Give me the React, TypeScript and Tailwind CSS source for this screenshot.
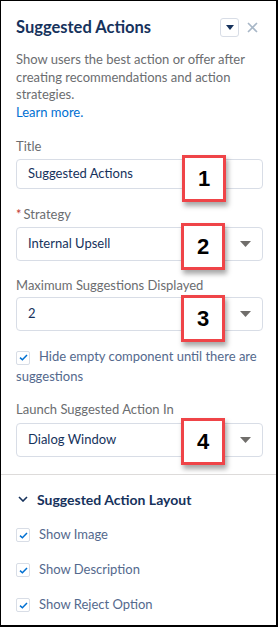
import React from "react";

function Badge({ n, top, left }: { n: string; top: number; left: number }) {
  return (
    <div
      className="absolute w-[44px] h-[47px] bg-white border-[3px] border-[#ef4448] shadow-[2px_4px_5px_rgba(0,0,0,0.35)] flex items-center justify-center font-['Liberation_Sans',Arial,sans-serif] font-bold text-[22px] text-black"
      style={{ top, left }}
    >
      {n}
    </div>
  );
}

function Arrow() {
  return (
    <svg width="11" height="6" viewBox="0 0 11 6" className="absolute right-[11px] top-1/2 -translate-y-1/2">
      <path d="M0 0 L11 0 L5.5 6 Z" fill="#706e6b" />
    </svg>
  );
}

function Check() {
  return (
    <span className="inline-flex w-[14px] h-[14px] items-center justify-center border border-[#d8dde6] rounded-[2px] bg-white align-middle shrink-0">
      <svg width="9" height="7" viewBox="0 0 9 7">
        <path d="M1 3.6 L3.4 5.8 L8 1" fill="none" stroke="#0070d2" strokeWidth="1.5" />
      </svg>
    </span>
  );
}

export default function App() {
  return (
    <div className="w-[278px] h-[627px] bg-white border-l border-t border-r-2 border-b-2 border-black overflow-hidden font-['Lato',sans-serif] relative">
      <div className="px-[15px] pr-[13px]">
        <div className="flex items-center justify-between pt-[16px] h-[36px]">
          <div className="text-[16.5px] leading-[20px] font-bold text-[#16325c]">Suggested Actions</div>
          <div className="flex items-center mr-[5px] gap-[8px]">
            <div className="w-[19px] h-[19px] border border-[#d8dde6] rounded-[3px] flex items-center justify-center">
              <svg width="8" height="5" viewBox="0 0 8 5">
                <path d="M0 0 L8 0 L4 5 Z" fill="#16325c" />
              </svg>
            </div>
            <svg width="11" height="11" viewBox="0 0 11 11">
              <path d="M1 1 L10 10 M10 1 L1 10" stroke="#a8b7c7" strokeWidth="1.6" />
            </svg>
          </div>
        </div>

        <div className="mt-[14px] text-[13px] leading-[17.5px] text-[#6b6d70]">
          Show users the best action or offer after creating recommendations and action strategies.
          <br />
          <span className="text-[#0070d2]">Learn more.</span>
        </div>

        <div className="mt-[16px] text-[13px] leading-[18px] text-[#6b6d70]">Title</div>
        <div className="relative mt-[4px] h-[30px] border border-[#d8dde6] rounded-[4px] flex items-center pl-[11px] text-[13px] text-[#16325c]">
          Suggested Actions
          <Badge n="1" top={-5} left={165} />
        </div>

        <div className="mt-[16px] text-[13px] leading-[18px] text-[#6b6d70]">
          <span className="text-[#c23934] mr-[2px]">*</span>Strategy
        </div>
        <div className="relative mt-[4px] h-[34px] border border-[#d8dde6] rounded-[4px] flex items-center pl-[11px] text-[13px] text-[#16325c]">
          Internal Upsell
          <Arrow />
          <Badge n="2" top={-5} left={164} />
        </div>

        <div className="mt-[15px] text-[13px] leading-[18px] text-[#6b6d70]">Maximum Suggestions Displayed</div>
        <div className="relative mt-[3px] h-[34px] border border-[#d8dde6] rounded-[4px] flex items-center pl-[11px] text-[13px] text-[#16325c]">
          2
          <Arrow />
          <Badge n="3" top={-3} left={164} />
        </div>

        <div className="mt-[15px] text-[13px] leading-[20px] text-[#54698d]">
          <Check />
          <span className="ml-[9px]">Hide empty component until there are</span>
          <br />
          suggestions
        </div>

        <div className="mt-[14px] text-[13px] leading-[18px] text-[#6b6d70]">Launch Suggested Action In</div>
        <div className="relative mt-[5px] h-[34px] border border-[#d8dde6] rounded-[4px] flex items-center pl-[11px] text-[13px] text-[#16325c]">
          Dialog Window
          <Arrow />
          <Badge n="4" top={-6} left={164} />
        </div>
      </div>

      <div className="mt-[17px] border-t border-[#dddbda]" />

      <div className="px-[15px]">
        <div className="mt-[14px] flex items-center h-[20px]">
          <svg width="10" height="6" viewBox="0 0 10 6" className="ml-[2px]">
            <path d="M1 1 L5 5 L9 1" fill="none" stroke="#16325c" strokeWidth="1.6" />
          </svg>
          <span className="ml-[9px] text-[14px] font-bold text-[#16325c]">Suggested Action Layout</span>
        </div>
        {["Show Image", "Show Description", "Show Reject Option"].map((t, i) => (
          <div key={t} className={`flex items-center h-[20px] text-[13px] text-[#54698d] ${i === 0 ? "mt-[16px]" : "mt-[15px]"}`}>
            <Check />
            <span className="ml-[9px]">{t}</span>
          </div>
        ))}
      </div>
    </div>
  );
}
